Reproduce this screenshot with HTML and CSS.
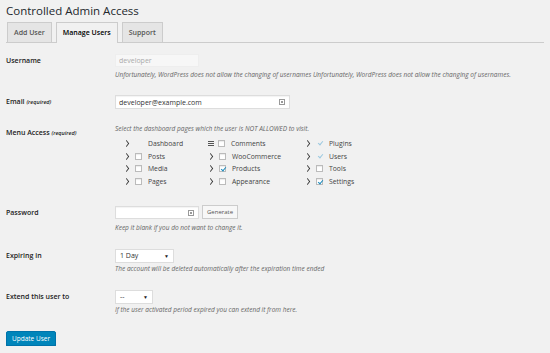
FILE: index.html
```html
<!DOCTYPE html>
<html lang="en">
<head>
    <meta charset="UTF-8">
    <title>Controlled Admin Access</title>
    <link rel="stylesheet" href="styles.css">
</head>
<body>
    <div class="wrap">
        <h1>Controlled Admin Access</h1>
        <nav class="tabs">
            <a class="tab" href="#">Add User</a>
            <a class="tab active" href="#">Manage Users</a>
            <a class="tab" href="#">Support</a>
        </nav>

        <form class="form">
            <div class="row row-user">
                <div class="label">Username</div>
                <div class="field">
                    <input class="text short" type="text" value="developer" disabled>
                    <p class="desc">Unfortunately, WordPress does not allow the changing of usernames Unfortunately, WordPress does not allow the changing of usernames.</p>
                </div>
            </div>

            <div class="row row-email">
                <div class="label">Email <span class="req">(required)</span></div>
                <div class="field">
                    <div class="input-wrap">
                        <input class="text long" type="text" value="developer@example.com">
                        <svg class="key" width="6" height="6" viewBox="0 0 6 6"><rect x="0.5" y="0.5" width="5" height="5" fill="none" stroke="#999"/><rect x="2" y="2" width="2" height="2" fill="#999"/></svg>
                    </div>
                </div>
            </div>

            <div class="row row-menu">
                <div class="label label-top">Menu Access <span class="req">(required)</span></div>
                <div class="field">
                    <p class="desc desc-top">Select the dashboard pages which the user is NOT ALLOWED to visit.</p>
                    <div class="menus">
                        <div class="col col-1">
                            <div class="item"><span class="chev"></span><span class="box none"></span>Dashboard</div>
                            <div class="item"><span class="chev"></span><span class="box"></span>Posts</div>
                            <div class="item"><span class="chev"></span><span class="box"></span>Media</div>
                            <div class="item"><span class="chev"></span><span class="box"></span>Pages</div>
                        </div>
                        <div class="col col-2">
                            <div class="item"><span class="burger"></span><span class="box"></span>Comments</div>
                            <div class="item"><span class="chev"></span><span class="box"></span>WooCommerce</div>
                            <div class="item"><span class="chev"></span><span class="box checked"></span>Products</div>
                            <div class="item"><span class="chev"></span><span class="box"></span>Appearance</div>
                        </div>
                        <div class="col col-3">
                            <div class="item"><span class="chev"></span><span class="box none checked"></span>Plugins</div>
                            <div class="item"><span class="chev"></span><span class="box none checked"></span>Users</div>
                            <div class="item"><span class="chev"></span><span class="box"></span>Tools</div>
                            <div class="item"><span class="chev"></span><span class="box checked"></span>Settings</div>
                        </div>
                    </div>
                </div>
            </div>

            <div class="row row-pass">
                <div class="label">Password</div>
                <div class="field">
                    <div class="inline">
                        <div class="input-wrap">
                            <input class="text short" type="password" value="">
                            <svg class="key" width="6" height="6" viewBox="0 0 6 6"><rect x="0.5" y="0.5" width="5" height="5" fill="none" stroke="#999"/><rect x="2" y="2" width="2" height="2" fill="#999"/></svg>
                        </div>
                        <button class="btn" type="button">Generate</button>
                    </div>
                    <p class="desc">Keep it blank if you do not want to change it.</p>
                </div>
            </div>

            <div class="row row-expire">
                <div class="label">Expiring in</div>
                <div class="field">
                    <div class="select wide">1 Day<span class="arrow">&#9660;</span></div>
                    <p class="desc">The account will be deleted automatically after the expiration time ended</p>
                </div>
            </div>

            <div class="row row-extend">
                <div class="label">Extend this user to</div>
                <div class="field">
                    <div class="select narrow">--<span class="arrow">&#9660;</span></div>
                    <p class="desc">If the user activated period expired you can extend it from here.</p>
                </div>
            </div>

            <button class="primary" type="submit">Update User</button>
        </form>
    </div>
</body>
</html>
```

FILE: styles.css
```css
body {
    margin: 0;
    background: #f1f1f1;
    font-family: "Open Sans", "Liberation Sans", sans-serif;
    color: #222;
}
.wrap {
    padding: 0 6px;
}
h1 {
    margin: 0;
    padding-top: 2px;
    font-size: 11.5px;
    font-weight: 400;
    line-height: 17px;
    color: #23282d;
}
.tabs {
    display: flex;
    gap: 4px;
    margin-top: 3px;
    padding-left: 1px;
    border-bottom: 1px solid #ccc;
    height: 20px;
}
.tab {
    display: block;
    height: 19px;
    padding: 0 6px;
    background: #e5e5e5;
    border: 1px solid #ccc;
    border-bottom: none;
    font-size: 7px;
    font-weight: 600;
    line-height: 19px;
    color: #555;
    text-decoration: none;
}
.tab.active {
    background: #f1f1f1;
    height: 20px;
    color: #000;
    margin-bottom: -1px;
}

.form {
    padding-top: 11px;
}
.row {
    display: flex;
}
.label {
    width: 109px;
    flex-shrink: 0;
    font-size: 7px;
    font-weight: 600;
    line-height: 13px;
    color: #222;
}
.req {
    font-size: 5.5px;
    font-style: italic;
    font-weight: 600;
}
.field {
    flex: 1;
}
.desc {
    margin: 0;
    font-size: 6.5px;
    font-style: italic;
    line-height: 10px;
    color: #666;
}

.text {
    display: block;
    box-sizing: border-box;
    height: 13px;
    margin: 0;
    padding: 0 3px;
    border: 1px solid #ddd;
    box-shadow: inset 0 1px 1px rgba(0, 0, 0, 0.05);
    background: #fff;
    font-family: inherit;
    font-size: 7px;
    color: #333;
}
.text.short {
    width: 84px;
}
.text.long {
    width: 175px;
}
.text:disabled {
    background: #f7f7f7;
    border-color: #eee;
    color: #aaa;
    box-shadow: none;
}
.input-wrap {
    position: relative;
    display: flex;
    width: max-content;
}
.key {
    position: absolute;
    right: 5px;
    top: 4px;
}

.row-user .desc {
    margin-top: 3px;
}
.row-email {
    margin-top: 15px;
}
.row-email .text {
    height: 14px;
}
.row-menu {
    margin-top: 15px;
}
.label-top {
    padding-top: 2px;
}
.menus {
    display: flex;
    padding-top: 3px;
    padding-left: 9px;
}
.col-1 {
    width: 84px;
}
.col-2 {
    width: 97px;
}
.item {
    display: flex;
    align-items: center;
    height: 12.8px;
    font-size: 6.8px;
    color: #444;
}
.chev {
    width: 4px;
    height: 4px;
    margin: 0 5px 0 0;
    border-right: 1.4px solid #333;
    border-top: 1.4px solid #333;
    transform: scale(0.75, 1) rotate(45deg);
}
.burger {
    width: 6px;
    height: 1px;
    margin-right: 3px;
    background: #555;
    box-shadow: 0 -2px 0 #555, 0 2px 0 #555;
}
.box {
    position: relative;
    box-sizing: border-box;
    width: 7px;
    height: 7px;
    margin: 0 6px 0 1px;
    border: 1px solid #bbb;
    background: #fff;
    box-shadow: inset 0 1px 1px rgba(0, 0, 0, 0.08);
}
.box.none {
    border-color: transparent;
    background: transparent;
    box-shadow: none;
}
.box.checked::after {
    content: "";
    position: absolute;
    left: 1.5px;
    top: -0.5px;
    width: 2px;
    height: 4px;
    border-right: 1.2px solid #1e8cbe;
    border-bottom: 1.2px solid #1e8cbe;
    transform: rotate(40deg);
}
.box.none.checked::after {
    border-color: #9cc9e0;
}

.row-pass {
    margin-top: 17px;
}
.inline {
    display: flex;
    align-items: center;
    gap: 3px;
}
.btn {
    height: 14px;
    padding: 0 4px;
    border: 1px solid #ccc;
    background: #f7f7f7;
    font-family: inherit;
    font-size: 6px;
    color: #555;
}
.row-pass .desc {
    margin-top: 4px;
}
.row-pass .label {
    padding-top: 1px;
}

.select {
    position: relative;
    box-sizing: border-box;
    height: 14px;
    padding-left: 4px;
    border: 1px solid #ddd;
    background: #fff;
    font-size: 7px;
    line-height: 12px;
    color: #333;
}
.select.wide {
    width: 59px;
}
.select.narrow {
    width: 38px;
}
.arrow {
    position: absolute;
    right: 4px;
    top: 0;
    font-size: 5px;
    color: #222;
}
.row-expire {
    margin-top: 16px;
}
.row-expire .desc,
.row-extend .desc {
    margin-top: 1px;
}
.row-extend {
    margin-top: 16px;
}

.primary {
    display: block;
    margin-top: 16px;
    height: 15px;
    padding: 0 5px;
    border: 1px solid #0073aa;
    border-radius: 2px;
    background: #0085ba;
    box-shadow: 0 1px 0 #006799;
    font-family: inherit;
    font-size: 6.5px;
    color: #fff;
}
```
